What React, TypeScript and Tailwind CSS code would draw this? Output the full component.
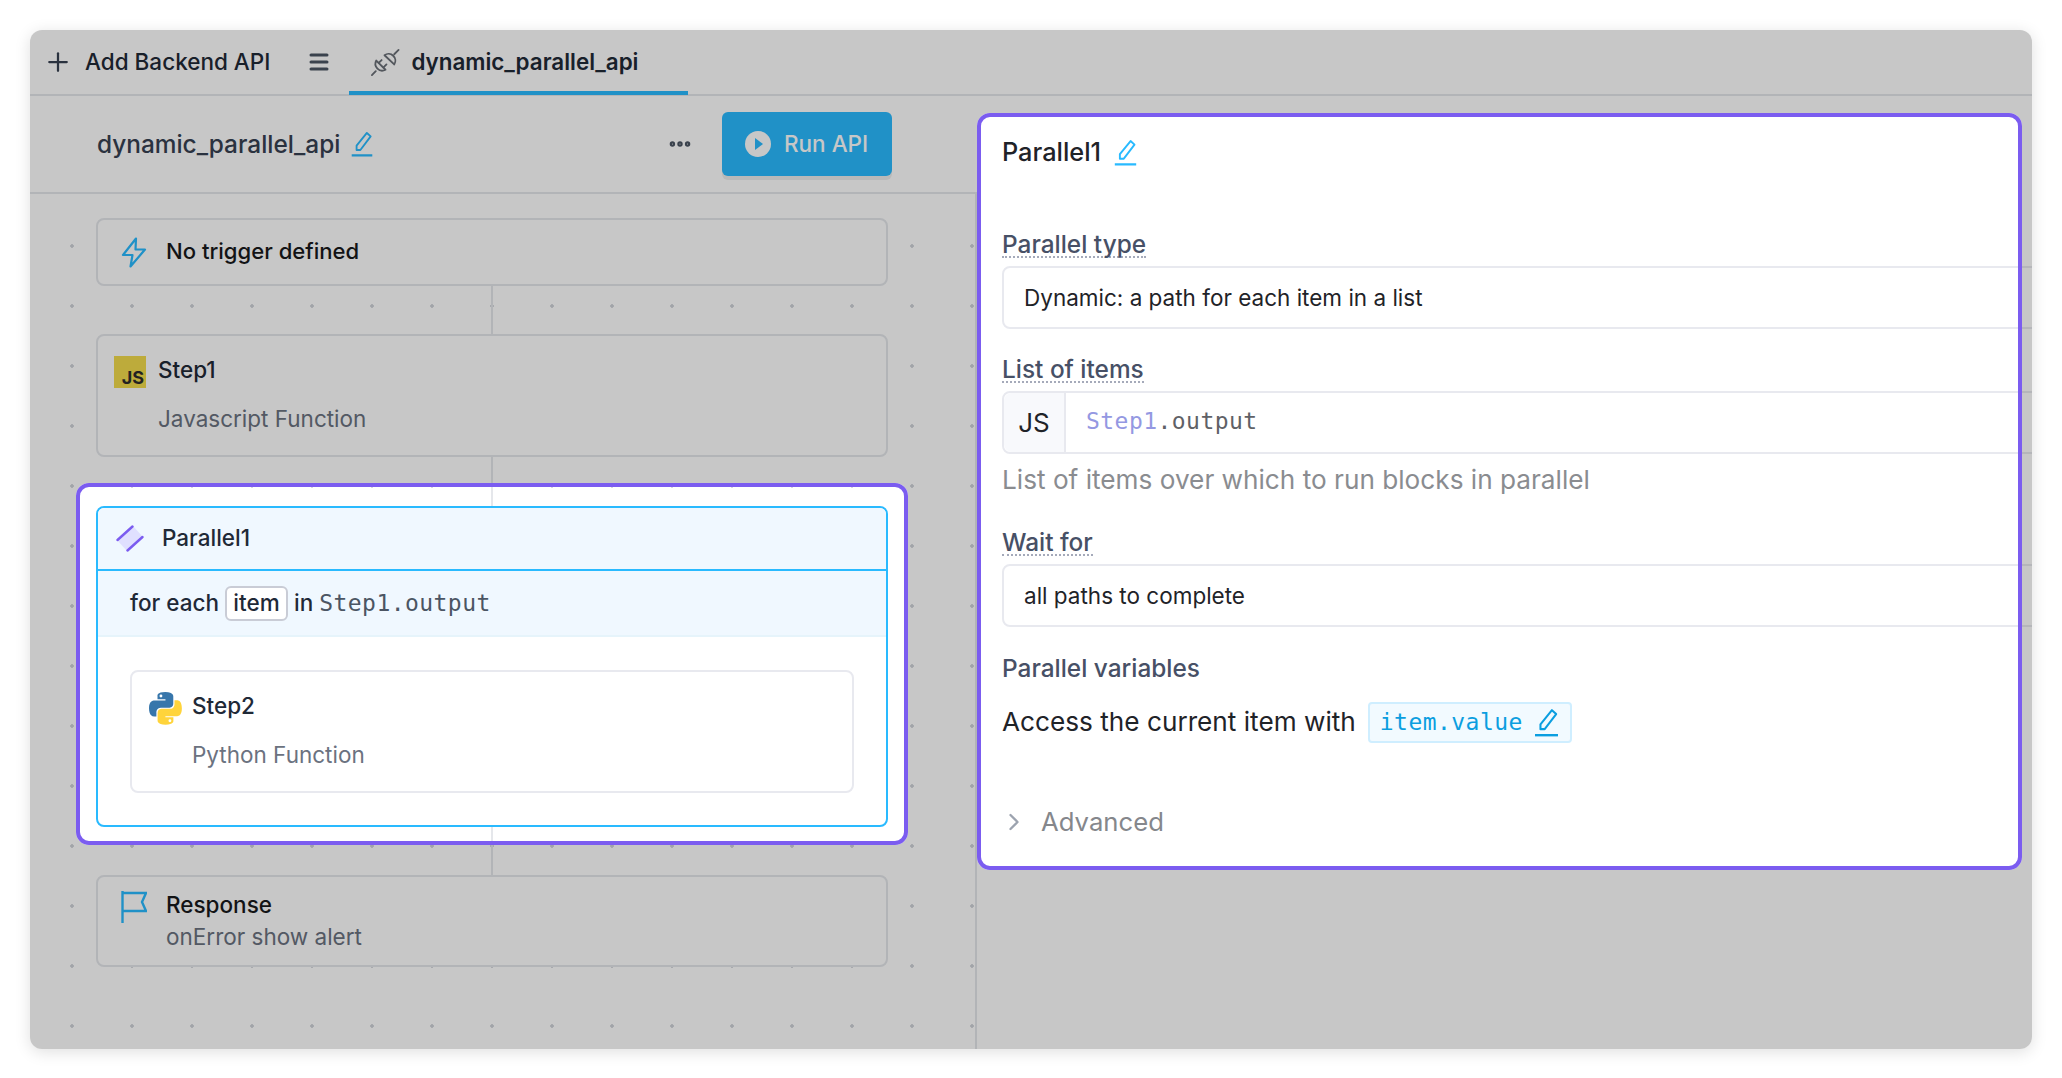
import React from "react";
import { Plus, Menu, ChevronRight, Ellipsis } from "lucide-react";

const mono = "[font-family:'DejaVu_Sans_Mono',monospace] text-[23px] tracking-[0.45px]";
const highlight = "pointer-events-none absolute rounded-[13px] border-4 border-[#7b5cf0] shadow-[0_0_0_3000px_rgba(0,0,0,0.22)]";

function PencilLine({ className }: { className?: string }) {
  return (
    <svg viewBox="0 0 24 24" fill="none" stroke="currentColor" strokeWidth="1.7" className={className}>
      <path d="M16.5 1.8 20 5 10.5 17.5H7V13.5Z" strokeLinejoin="round" />
      <path d="M2.5 22.5h19" strokeWidth="2" />
    </svg>
  );
}

function PlugIcon() {
  return (
    <svg viewBox="20 15 33 33" fill="none" stroke="#6b7078" strokeWidth="1.9" className="h-[32px] w-[32px]" strokeLinecap="round">
      <path d="M36 24.5A7 7 0 0 1 46 34Z" strokeLinejoin="round" />
      <path d="M46 23.5l4.5-4.5" />
      <path d="M37 39.5A7 7 0 0 1 27.5 30Z" strokeLinejoin="round" />
      <path d="M30 32.5l3-3M35 37l3-3M27 41l-4 4" />
    </svg>
  );
}

function BoltIcon() {
  return (
    <svg viewBox="0 0 26 31" fill="none" stroke="#29baff" strokeWidth="2.2" strokeLinejoin="round" className="h-[31px] w-[26px] shrink-0">
      <path d="M15 1.5 2 18h9.5L9.5 29.5 24 12.5H14.5Z" />
    </svg>
  );
}

function ParallelIcon() {
  return (
    <svg viewBox="0 0 28 27" className="h-[27px] w-[28px]" fill="none">
      <path d="M1 15 17 1 27 12 11 26Z" fill="#e0e0ff" />
      <path d="M1.5 15 16.5 1.5M11.5 25.5 26.5 12" stroke="#7b5cf0" strokeWidth="2.4" strokeLinecap="round" />
    </svg>
  );
}

function PythonIcon() {
  return (
    <svg viewBox="0 0 111 111" className="h-[33px] w-[33px] shrink-0">
      <path fillRule="evenodd" fill="#3776ab" d="M54.9 0C26.8 0 28.6 12.2 28.6 12.2l0 12.6h26.8v3.8H17.9S0 26.6 0 54.8c0 28.2 15.6 27.2 15.6 27.2h9.3V68.9s-.5-15.6 15.4-15.6h26.5s14.9.2 14.9-14.4V14.7S84 0 54.9 0zM40.2 8.5a4.8 4.8 0 1 1 0 9.6 4.8 4.8 0 0 1 0-9.6z" />
      <path fillRule="evenodd" fill="#ffd43b" d="M55.7 110c28.1 0 26.3-12.2 26.3-12.2V85.2H55.2v-3.8h37.5s17.9 2 17.9-26.2c0-28.2-15.6-27.2-15.6-27.2h-9.3v13.1s.5 15.6-15.4 15.6H43.8s-14.9-.2-14.9 14.4v24.2S26.6 110 55.7 110zm14.7-8.5a4.8 4.8 0 1 1 0-9.6 4.8 4.8 0 0 1 0 9.6z" />
    </svg>
  );
}

function FlagIcon() {
  return (
    <svg viewBox="0 0 26 32" fill="none" stroke="#29baff" strokeWidth="2.4" className="h-[32px] w-[26px] shrink-0">
      <path d="M1.5 0v32" />
      <path d="M1.5 2H25L21 11l4 9H1.5" />
    </svg>
  );
}

function Connector({ h }: { h: string }) {
  return <div className={`mx-auto w-0.5 bg-[#e5e7eb] ${h}`} />;
}

function Label({ children }: { children: React.ReactNode }) {
  return (
    <div className="h-[28px]">
      <span className="inline-block h-[28px] border-b-2 border-dotted border-[#a5aaba] text-[24.4px] leading-[28px] font-medium text-[#475066]">
        {children}
      </span>
    </div>
  );
}

function SelectField({ children }: { children: React.ReactNode }) {
  return (
    <div className="mt-2 -mr-[40px] flex h-[63px] items-center rounded-l-lg border-2 border-[#e8e9ef] pl-5 text-[22.5px] text-[#1f2328]">
      {children}
    </div>
  );
}

export default function App() {
  return (
    <div className="min-h-screen bg-white p-[30px] [font-family:Inter,sans-serif]">
      <div className="flex h-[1019px] flex-col overflow-hidden rounded-[12px] bg-white shadow-[0_3px_16px_rgba(0,0,0,0.13)]">
        {/* tabs */}
        <div className="relative flex h-[66px] shrink-0 items-center border-b-2 border-[#e5e7eb] pl-[13px]">
          <Plus className="h-[30px] w-[30px] text-[#374151]" strokeWidth={1.8} />
          <span className="ml-[12px] text-[22.5px] font-medium text-[#1f2937]">Add Backend API</span>
          <Menu className="ml-[37px] h-[24px] w-[24px] text-[#4b5563]" strokeWidth={3} />
          <div className="ml-[18px] flex h-[66px] w-[339px] items-center gap-[10px] border-b-4 border-[#29baff] pt-[3px] pl-[20px]">
            <PlugIcon />
            <span className="text-[22.4px] font-semibold text-[#1f2937]">dynamic_parallel_api</span>
          </div>
          <div className="pointer-events-none absolute inset-x-0 top-0 -bottom-0.5 bg-[rgba(0,0,0,0.22)]" />
        </div>

        <div className="flex min-h-0 flex-1">
          {/* flow column */}
          <div className="relative flex w-[947px] shrink-0 flex-col overflow-hidden bg-[radial-gradient(circle,#cfd2d8_1.5px,transparent_2px)] bg-[size:60px_60px] bg-[position:12px_0px]">
            <div className="absolute inset-y-0 right-0 w-0.5 bg-[#e5e7eb]" />
            <div className="relative flex h-[98px] shrink-0 items-center border-b-2 border-[#e5e7eb] bg-white pr-[85px] pl-[67px]">
              <span className="text-[24.4px] font-medium text-[#374151]">dynamic_parallel_api</span>
              <PencilLine className="ml-[9px] h-[26px] w-[26px] text-[#29baff]" />
              <Ellipsis className="mr-[29px] ml-auto h-[26px] w-[26px] text-[#4b5563]" strokeWidth={3} />
              <div className="flex h-[64px] w-[170px] items-center gap-[13px] rounded-[6px] bg-[#29baff] pl-[23px] text-[22.5px] font-medium text-white shadow-[0_4px_0_rgba(0,0,0,0.07)]">
                <span className="flex h-[26px] w-[26px] items-center justify-center rounded-full bg-white">
                  <span className="ml-[2px] h-0 w-0 border-y-[6px] border-l-[8px] border-y-transparent border-l-[#29baff]" />
                </span>
                Run API
              </div>
            </div>

            <div className="relative mt-[24px] ml-[66px] w-[792px]">
              <div className="flex h-[68px] items-center rounded-lg border-2 border-[#e5e7eb] bg-white pl-[23px]">
                <BoltIcon />
                <span className="ml-[19px] text-[22.1px] font-medium text-[#18191c]">No trigger defined</span>
              </div>
              <Connector h="h-[48px]" />

              <div className="h-[123px] rounded-lg border-2 border-[#e5e7eb] bg-white pt-[20px] pl-[16px]">
                <div className="flex">
                  <div className="flex h-[32px] w-[32px] shrink-0 items-end justify-end bg-[#f2dc4c] pr-[2px] text-[18px] leading-[21px] font-bold text-[#2c2c2c]">
                    JS
                  </div>
                  <div className="ml-[12px]">
                    <div className="text-[22.5px] leading-[28px] font-medium text-[#1f2937]">Step1</div>
                    <div className="mt-[21px] text-[22.5px] leading-[28px] text-[#6b7280]">Javascript Function</div>
                  </div>
                </div>
              </div>
              <Connector h="h-[49px]" />

              <div className="relative h-[321px] rounded-lg border-2 border-[#29baff] bg-white">
                <div className="flex h-[63px] items-center rounded-t-md border-b-2 border-[#29baff] bg-[#f0f8ff] pb-[1px] pl-[18px]">
                  <ParallelIcon />
                  <span className="ml-[18px] text-[22.5px] font-medium text-[#1f2937]">Parallel1</span>
                </div>
                <div className="flex h-[66px] items-center border-b-2 border-[#e6f4fb] bg-[#f0f8ff] pl-[32px] text-[22.5px] font-medium text-[#1f2937]">
                  for each
                  <span className="mx-[6px] flex h-[35px] w-[63px] items-center justify-center rounded-md border-2 border-[#c9ccd6] bg-white">item</span>
                  in
                  <span className={`ml-[6px] font-normal text-[#4b5563] ${mono}`}>Step1.output</span>
                </div>
                <div className="mx-[32px] mt-[33px] flex h-[123px] rounded-lg border-2 border-[#e8e9ef] bg-white pt-[20px] pl-[17px]">
                  <PythonIcon />
                  <div className="ml-[10px]">
                    <div className="text-[22.5px] leading-[28px] font-medium text-[#1f2937]">Step2</div>
                    <div className="mt-[21px] text-[22.5px] leading-[28px] text-[#6b7280]">Python Function</div>
                  </div>
                </div>
                <div className={`-top-[25px] -right-[22px] -bottom-[20px] -left-[22px] ${highlight}`} />
              </div>
              <Connector h="h-[48px]" />

              <div className="flex h-[92px] rounded-lg border-2 border-[#e5e7eb] bg-white pt-[14px] pl-[23px]">
                <FlagIcon />
                <div className="ml-[19px]">
                  <div className="text-[22.5px] leading-[28px] font-medium text-[#18191c]">Response</div>
                  <div className="mt-[4px] text-[22.5px] leading-[28px] text-[#6b7280]">onError show alert</div>
                </div>
              </div>
            </div>
          </div>

          {/* settings column */}
          <div className="relative min-w-0 flex-1 overflow-hidden bg-white pt-[41px] pl-[25px]">
            <div className="flex h-[30px] items-center">
              <span className="text-[25.3px] font-medium text-[#1f2328]">Parallel1</span>
              <PencilLine className="ml-[11px] h-[27px] w-[27px] text-[#29baff]" />
            </div>

            <div className="mt-[63px]">
              <Label>Parallel type</Label>
            </div>
            <SelectField>Dynamic: a path for each item in a list</SelectField>

            <div className="mt-[26px]">
              <Label>List of items</Label>
            </div>
            <div className="mt-2 -mr-[40px] flex h-[63px] items-stretch rounded-l-lg border-2 border-[#e8e9ef]">
              <div className="flex w-[62px] items-center justify-center rounded-l-lg border-r-2 border-[#e8e9ef] bg-[#f8f9fc] text-[26px] text-[#1f2328]">JS</div>
              <div className={`ml-[20px] flex items-center pb-[2px] ${mono}`}>
                <span className="text-[#9498e2]">Step1</span>
                <span className="text-[#5f6166]">.output</span>
              </div>
            </div>
            <div className="mt-[10px] h-[32px] text-[26.2px] leading-[32px] text-[#8a8c90]">List of items over which to run blocks in parallel</div>

            <div className="mt-[32px]">
              <Label>Wait for</Label>
            </div>
            <SelectField>all paths to complete</SelectField>

            <div className="mt-[27px] h-[28px] text-[24.4px] leading-[28px] font-medium text-[#475066]">Parallel variables</div>

            <div className="mt-[20px] flex items-center">
              <span className="pb-[2px] text-[26.2px] text-[#1f2328]">Access the current item with</span>
              <div className="ml-[12px] flex h-[41px] items-center rounded-[4px] border-2 border-[#cfeeff] bg-[#f2faff] pr-[9px] pl-[10px] text-[#0b9ee0]">
                <span className={mono}>item.value</span>
                <PencilLine className="ml-[9px] h-[29px] w-[29px]" />
              </div>
            </div>

            <div className="mt-[63px] flex h-[32px] items-center">
              <ChevronRight className="-ml-[2px] h-[28px] w-[28px] text-[#9ca3af]" strokeWidth={2} />
              <span className="ml-[13px] text-[25.7px] text-[#85878c]">Advanced</span>
            </div>

            <div className={`top-[17px] right-[10px] left-0 h-[757px] ${highlight}`} />
          </div>
        </div>
      </div>
    </div>
  );
}
